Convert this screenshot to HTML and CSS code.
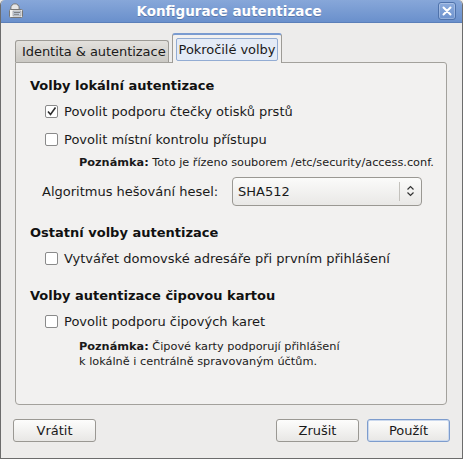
FILE: index.html
```html
<!DOCTYPE html>
<html lang="cs">
<head>
<meta charset="utf-8">
<link rel="stylesheet" href="styles.css">
</head>
<body>
<div class="window">
  <div class="titlebar">
    <svg class="appicon" width="16" height="16" viewBox="0 0 16 16">
      <circle cx="7" cy="5" r="4.2" fill="#e6e6e6" stroke="#777" stroke-width="1"/>
      <rect x="1.5" y="6.5" width="13" height="8" rx="1" fill="#f4f4f4" stroke="#777" stroke-width="1"/>
      <rect x="5" y="8" width="8" height="5" fill="#c9d3e2" stroke="#8a8a8a" stroke-width="0.6"/>
      <path d="M6 9.5h6M6 11.3h5" stroke="#6a6a6a" stroke-width="0.8"/>
    </svg>
    <div class="title">Konfigurace autentizace</div>
    <div class="close">
      <svg width="10" height="10" viewBox="0 0 10 10"><path d="M1.5 1.5L8.5 8.5M8.5 1.5L1.5 8.5" stroke="#fff" stroke-width="2" stroke-linecap="round"/></svg>
    </div>
  </div>
  <div class="body">
    <div class="tabs">
      <div class="tab">Identita &amp; autentizace</div>
      <div class="tab active"><span class="focus">Pokročilé volby</span></div>
    </div>
    <div class="panel">
      <div class="heading h-first">Volby lokální autentizace</div>
      <label class="check c-first"><span class="box checked"><svg width="11" height="11" viewBox="0 0 11 11"><path d="M2 5.5L4.5 8.5L9.5 1.5" fill="none" stroke="#2e2e2e" stroke-width="1.6"/></svg></span>Povolit podporu čtečky otisků prstů</label>
      <label class="check c-next"><span class="box"></span>Povolit místní kontrolu přístupu</label>
      <div class="note n-first"><b>Poznámka:</b> Toto je řízeno souborem /etc/security/access.conf.</div>
      <div class="algo">
        <span class="algo-label">Algoritmus hešování hesel:</span>
        <div class="combo">
          <span class="combo-text">SHA512</span>
          <span class="combo-sep"></span>
          <svg class="combo-arrow" width="9" height="12" viewBox="0 0 9 12"><path d="M1.5 4.5L4.5 1.5L7.5 4.5M1.5 7.5L4.5 10.5L7.5 7.5" fill="none" stroke="#333" stroke-width="1.2"/></svg>
        </div>
      </div>
      <div class="heading h-second">Ostatní volby autentizace</div>
      <label class="check c-sub"><span class="box"></span>Vytvářet domovské adresáře při prvním přihlášení</label>
      <div class="heading h-third">Volby autentizace čipovou kartou</div>
      <label class="check c-sub"><span class="box"></span>Povolit podporu čipových karet</label>
      <div class="note n-second"><b>Poznámka:</b> Čipové karty podporují přihlášení<br>k lokálně i centrálně spravovaným účtům.</div>
    </div>
    <div class="buttons">
      <button class="btn">Vrátit</button>
      <span class="spacer"></span>
      <button class="btn">Zrušit</button>
      <button class="btn default">Použít</button>
    </div>
  </div>
</div>
</body>
</html>
```
FILE: styles.css
```css
* { box-sizing: border-box; }
html, body { margin: 0; padding: 0; }
body {
  width: 463px;
  height: 459px;
  font-family: "DejaVu Sans", sans-serif;
  font-size: 13px;
  color: #1a1a1a;
  background: #edeceb;
}
.window {
  width: 463px;
  height: 459px;
  display: flex;
  flex-direction: column;
  background: #edeceb;
  border-left: 1px solid #6c6c6c;
  border-right: 1px solid #6c6c6c;
  border-bottom: 1px solid #6c6c6c;
  border-radius: 5px 5px 0 0;
  overflow: hidden;
}
.titlebar {
  height: 23px;
  flex: none;
  display: flex;
  align-items: center;
  background: linear-gradient(#87a7d9, #6a90cc);
  border-bottom: 1px solid #5b7fb9;
  padding: 0 6px 0 7px;
}
.appicon { flex: none; }
.title {
  flex: 1;
  text-align: center;
  color: #fff;
  font-weight: bold;
  font-size: 13.5px;
  text-shadow: 0 1px 0 rgba(40,60,100,0.35);
  padding-right: 4px;
}
.close {
  width: 18px;
  height: 18px;
  flex: none;
  border: 1px solid #4f72ab;
  border-radius: 3px;
  background: linear-gradient(#8cabdc, #6e93ce);
  display: flex;
  align-items: center;
  justify-content: center;
  box-shadow: inset 0 0 0 1px rgba(255,255,255,0.25);
}
.body {
  flex: 1;
  display: flex;
  flex-direction: column;
  padding: 10px 0 0 0;
}
.tabs {
  display: flex;
  align-items: flex-end;
  height: 29px;
  margin-left: 14px;
  position: relative;
  z-index: 1;
}
.tab {
  height: 22px;
  padding: 0 2px 0 6px;
  line-height: 22px;
  border: 1px solid #9d9b96;
  border-bottom: none;
  border-radius: 3px 3px 0 0;
  background: linear-gradient(#e3e1dd, #cbc9c4);
  color: #1a1a1a;
  letter-spacing: -0.05px;
}
.tab.active {
  height: 30px;
  margin-left: 3px;
  margin-bottom: -1px;
  padding: 3px 3px 0 3px;
  line-height: normal;
  background: #f2f1f0;
  border-color: #9d9b96;
  border-top: 2px solid #7a9bd0;
}
.focus {
  display: block;
  height: 23px;
  line-height: 21px;
  padding: 0 2px;
  border: 1px solid #93acd3;
  border-radius: 2px;
  background: #e4ebf6;
}
.panel {
  height: 343px;
  margin: 0 15px 0 14px;
  border: 1px solid #a3a19c;
  border-radius: 0 3px 4px 4px;
  background: #f2f1f0;
  padding: 12px 0 0 14px;
  display: flex;
  flex-direction: column;
}
.heading {
  height: 20px;
  line-height: 20px;
  font-weight: bold;
  color: #111;
}
.h-first { margin-top: 1px; }
.h-second { margin-top: 18px; }
.h-third { margin-top: 16px; }
.check {
  display: flex;
  align-items: center;
  height: 24px;
  padding-left: 15px;
}
.c-first { margin-top: 3px; }
.c-next { margin-top: 4px; }
.c-sub { margin-top: 3px; }
.box {
  width: 13px;
  height: 13px;
  flex: none;
  border: 1px solid #8a8a8a;
  border-radius: 2px;
  background: #fff;
  margin-right: 6px;
  display: flex;
  align-items: center;
  justify-content: center;
}
.note {
  font-size: 11.3px;
  padding-left: 49px;
  line-height: 16px;
  color: #1a1a1a;
}
.n-first { margin-top: 4px; height: 16px; }
.n-second { margin-top: 6px; line-height: 15px; }
.algo {
  display: flex;
  align-items: center;
  height: 28px;
  margin-top: 6px;
  padding-left: 12px;
}
.algo-label { width: 190px; flex: none; }
.combo {
  width: 190px;
  height: 29px;
  display: flex;
  align-items: center;
  border: 1px solid #9a9893;
  border-radius: 4px;
  background: linear-gradient(#fbfbfa, #e9e8e6);
  padding-left: 5px;
}
.combo-text { flex: 1; }
.combo-sep {
  width: 1px;
  height: 19px;
  background: #c3c1bc;
  margin-right: 6px;
}
.combo-arrow { margin-right: 6px; }
.buttons {
  display: flex;
  align-items: center;
  margin-top: 14px;
  padding: 0 12px 0 12px;
  gap: 8px;
}
.spacer { flex: 1; }
.btn {
  width: 83px;
  height: 23px;
  font-family: "DejaVu Sans", sans-serif;
  font-size: 13px;
  color: #1a1a1a;
  border: 1px solid #9a9893;
  border-radius: 3px;
  background: linear-gradient(#fdfdfc, #e8e7e5);
  padding: 0;
}
.btn.default { border-color: #7d9ccd; box-shadow: inset 0 0 0 1px #cbd9ee; }
```
